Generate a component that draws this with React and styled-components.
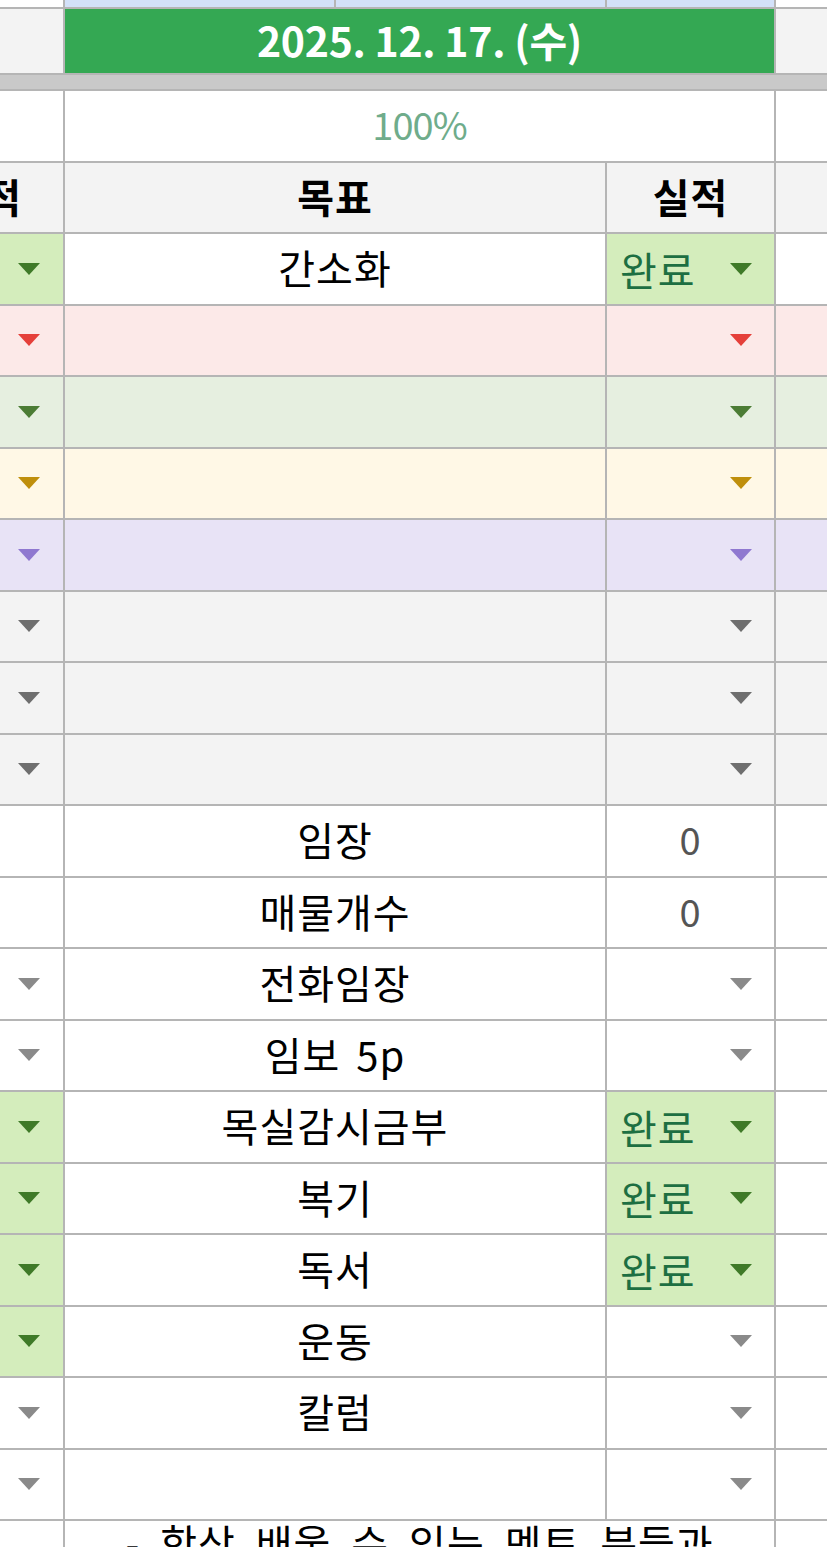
import React from "react";
import styled, { createGlobalStyle } from "styled-components";

const GlobalStyle = createGlobalStyle`
  html, body {
    margin: 0;
    padding: 0;
    background: #ffffff;
    overflow: hidden;
  }
  body {
    font-family: "Noto Sans CJK KR", "Noto Sans", sans-serif;
  }
`;

const LINE = "#b5b5b5";
const CHIP = "#d4edbc";

const Sheet = styled.div`
  display: grid;
  width: 827px;
  height: 1547px;
  overflow: hidden;
  grid-template-columns: 63px 269px 269px 167px 1fr;
  grid-template-rows: 7px 64px 14px;
  grid-auto-rows: 69.5px;
  gap: 2px;
  background: ${LINE};
`;

const Cell = styled.div`
  grid-column: span ${(p) => p.$span || 1};
  background: ${(p) => p.$bg || "#ffffff"};
  display: flex;
  align-items: center;
  justify-content: ${(p) => p.$justify || "center"};
  overflow: hidden;
  white-space: nowrap;
  font-size: 40px;
  letter-spacing: 1px;
  word-spacing: 6px;
  line-height: 1;
  padding-bottom: 3px;
  box-sizing: border-box;
  color: ${(p) => p.$color || "#000000"};
  font-weight: ${(p) => (p.$bold ? 700 : 400)};
`;

const Band = styled.div`
  grid-column: 1 / -1;
  background: #c9c9c9;
`;

const DateCell = styled(Cell)`
  background: #34a853;
  color: #ffffff;
  font-weight: 700;
  font-size: 41px;
  letter-spacing: -0.3px;
  word-spacing: 0;
`;

const Percent = styled(Cell)`
  color: #6fac8b;
  font-size: 38px;
  letter-spacing: -1px;
`;

const ClippedHead = styled(Cell)`
  justify-content: flex-end;
  padding-right: 41px;
`;

const StatusCell = styled(Cell)`
  justify-content: ${(p) => (p.$edge ? "center" : "space-between")};
  padding: ${(p) => (p.$edge ? "0 5px 0 0" : "0 22px 0 13px")};
  color: #1d6f42;
`;

const Arrow = styled.span`
  width: 0;
  height: 0;
  margin-left: auto;
  border-left: 11px solid transparent;
  border-right: 11px solid transparent;
  border-top: 12px solid ${(p) => p.$color};
  ${(p) => p.$edge && "margin-right: auto;"}
`;

const Count = styled(Cell)`
  color: #555555;
  font-size: 38px;
`;

const NoteCell = styled(Cell)`
  align-items: flex-start;
  padding-top: 1px;
  word-spacing: 10px;
`;

const GREEN = "#3f7a28";
const GREY = "#6e6e6e";
const LIGHT = "#8a8a8a";

const rows = [
  { goal: "간소화", left: { bg: CHIP, arrow: GREEN }, right: { bg: CHIP, label: "완료", arrow: GREEN } },
  { bg: "#fce9e8", left: { arrow: "#e5403a" }, right: { arrow: "#e5403a" } },
  { bg: "#e6efe0", left: { arrow: "#4c7c35" }, right: { arrow: "#4c7c35" } },
  { bg: "#fff8e6", left: { arrow: "#bf8f0c" }, right: { arrow: "#bf8f0c" } },
  { bg: "#e8e3f6", left: { arrow: "#8f78d0" }, right: { arrow: "#8f78d0" } },
  { bg: "#f3f3f3", left: { arrow: GREY }, right: { arrow: GREY } },
  { bg: "#f3f3f3", left: { arrow: GREY }, right: { arrow: GREY } },
  { bg: "#f3f3f3", left: { arrow: GREY }, right: { arrow: GREY } },
  { goal: "임장", count: "0" },
  { goal: "매물개수", count: "0" },
  { goal: "전화임장", left: { arrow: LIGHT }, right: { arrow: LIGHT } },
  { goal: "임보 5p", left: { arrow: LIGHT }, right: { arrow: LIGHT } },
  { goal: "목실감시금부", left: { bg: CHIP, arrow: GREEN }, right: { bg: CHIP, label: "완료", arrow: GREEN } },
  { goal: "복기", left: { bg: CHIP, arrow: GREEN }, right: { bg: CHIP, label: "완료", arrow: GREEN } },
  { goal: "독서", left: { bg: CHIP, arrow: GREEN }, right: { bg: CHIP, label: "완료", arrow: GREEN } },
  { goal: "운동", left: { bg: CHIP, arrow: GREEN }, right: { arrow: LIGHT } },
  { goal: "칼럼", left: { arrow: LIGHT }, right: { arrow: LIGHT } },
  { goal: "", left: { arrow: LIGHT }, right: { arrow: LIGHT } },
];

const GoalRow = ({ row }) => {
  const bg = row.bg || "#ffffff";
  const left = row.left;
  const right = row.right;
  return (
    <>
      {left ? (
        <StatusCell $edge $bg={left.bg || bg}>
          <Arrow $edge $color={left.arrow} />
        </StatusCell>
      ) : (
        <Cell $bg={bg} />
      )}
      <Cell $span={2} $bg={bg}>
        {row.goal}
      </Cell>
      {right ? (
        <StatusCell $bg={right.bg || bg}>
          {right.label && <span>{right.label}</span>}
          <Arrow $color={right.arrow} />
        </StatusCell>
      ) : (
        <Count $bg={bg}>{row.count}</Count>
      )}
      <Cell $bg={bg} />
    </>
  );
};

export default function App() {
  return (
    <>
      <GlobalStyle />
      <Sheet>
        <Cell />
        <Cell $bg="#d3e1f9" />
        <Cell $bg="#d3e1f9" />
        <Cell $bg="#d3e1f9" />
        <Cell />

        <Cell $bg="#f3f3f3" />
        <DateCell $span={3}>2025. 12. 17. (수)</DateCell>
        <Cell $bg="#f3f3f3" />

        <Band />

        <Cell />
        <Percent $span={3}>100%</Percent>
        <Cell />

        <ClippedHead $bg="#f3f3f3" $bold>
          실적
        </ClippedHead>
        <Cell $span={2} $bg="#f3f3f3" $bold>
          목표
        </Cell>
        <Cell $bg="#f3f3f3" $bold>
          실적
        </Cell>
        <Cell $bg="#f3f3f3" />

        {rows.map((row, i) => (
          <GoalRow key={i} row={row} />
        ))}

        <Cell />
        <NoteCell $span={3}>- 항상 배울 수 있는 멘토 분들과</NoteCell>
        <Cell />
      </Sheet>
    </>
  );
}
